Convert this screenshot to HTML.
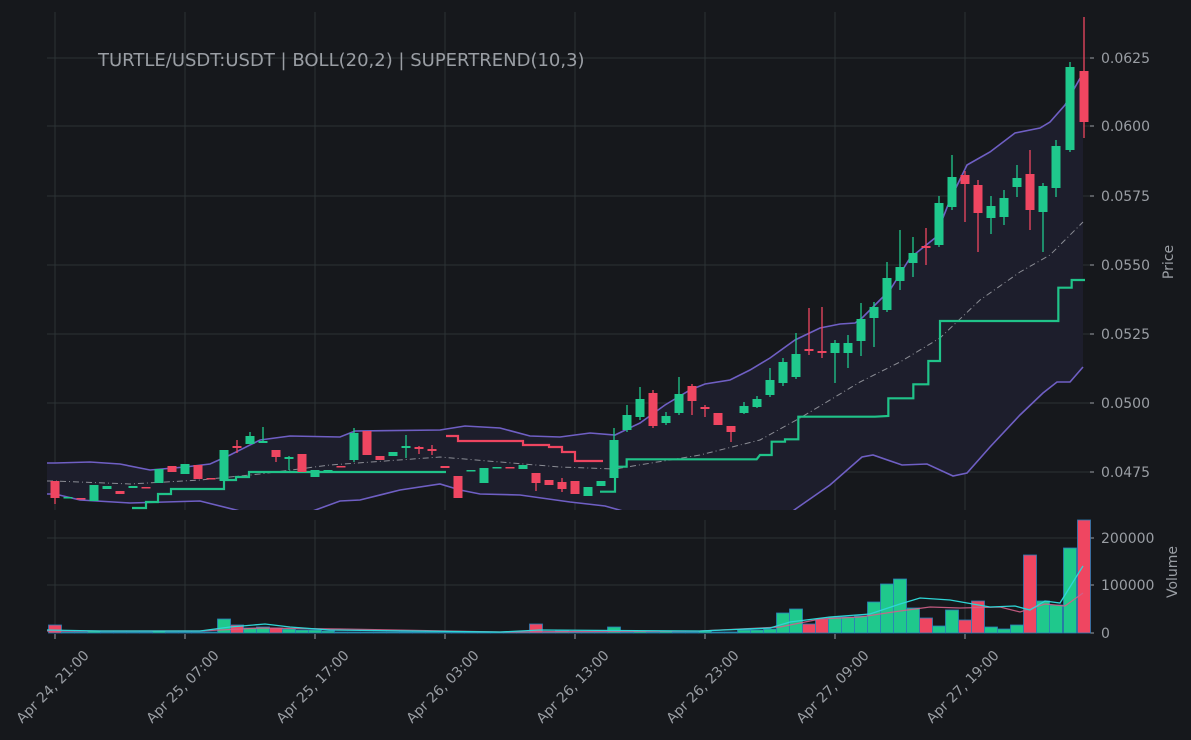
<!DOCTYPE html>
<html><head><meta charset="utf-8"><style>
html,body{margin:0;padding:0;background:#16181c;}
svg{display:block;font-family:"DejaVu Sans","Liberation Sans",sans-serif;}
</style></head><body>
<svg id="s" width="1191" height="740" viewBox="0 0 1191 740" xmlns="http://www.w3.org/2000/svg">
<rect width="1191" height="740" fill="#16181c"/>
<g stroke="#2c3235" stroke-width="1">
<line x1="47" y1="58" x2="1090" y2="58"/><line x1="47" y1="126" x2="1090" y2="126"/><line x1="47" y1="196" x2="1090" y2="196"/><line x1="47" y1="265" x2="1090" y2="265"/><line x1="47" y1="334" x2="1090" y2="334"/><line x1="47" y1="403" x2="1090" y2="403"/><line x1="47" y1="472" x2="1090" y2="472"/>
<line x1="47" y1="538" x2="1090" y2="538"/><line x1="47" y1="585" x2="1090" y2="585"/>
<line x1="55" y1="12" x2="55" y2="510"/><line x1="185" y1="12" x2="185" y2="510"/><line x1="315" y1="12" x2="315" y2="510"/><line x1="445" y1="12" x2="445" y2="510"/><line x1="575" y1="12" x2="575" y2="510"/><line x1="705" y1="12" x2="705" y2="510"/><line x1="835" y1="12" x2="835" y2="510"/><line x1="965" y1="12" x2="965" y2="510"/>
<line x1="55" y1="520" x2="55" y2="633"/><line x1="185" y1="520" x2="185" y2="633"/><line x1="315" y1="520" x2="315" y2="633"/><line x1="445" y1="520" x2="445" y2="633"/><line x1="575" y1="520" x2="575" y2="633"/><line x1="705" y1="520" x2="705" y2="633"/><line x1="835" y1="520" x2="835" y2="633"/><line x1="965" y1="520" x2="965" y2="633"/>
</g>
<g stroke="#9a9ea4" stroke-width="1">
<line x1="55" y1="634" x2="55" y2="639"/><line x1="185" y1="634" x2="185" y2="639"/><line x1="315" y1="634" x2="315" y2="639"/><line x1="445" y1="634" x2="445" y2="639"/><line x1="575" y1="634" x2="575" y2="639"/><line x1="705" y1="634" x2="705" y2="639"/><line x1="835" y1="634" x2="835" y2="639"/><line x1="965" y1="634" x2="965" y2="639"/>
<line x1="1090" y1="58" x2="1094" y2="58"/><line x1="1090" y1="126" x2="1094" y2="126"/><line x1="1090" y1="196" x2="1094" y2="196"/><line x1="1090" y1="265" x2="1094" y2="265"/><line x1="1090" y1="334" x2="1094" y2="334"/><line x1="1090" y1="403" x2="1094" y2="403"/><line x1="1090" y1="472" x2="1094" y2="472"/>
<line x1="1090" y1="538" x2="1094" y2="538"/><line x1="1090" y1="585" x2="1094" y2="585"/><line x1="1090" y1="633" x2="1094" y2="633"/>
</g>
<defs><clipPath id="cp"><rect x="47" y="12" width="1043" height="498"/></clipPath></defs>
<g id="main" clip-path="url(#cp)"></g>
<g id="vol"></g>
<g fill="#9a9ea4" font-size="14">
<text x="1101" y="63">0.0625</text><text x="1101" y="131">0.0600</text><text x="1101" y="201">0.0575</text><text x="1101" y="270">0.0550</text><text x="1101" y="339">0.0525</text><text x="1101" y="408">0.0500</text><text x="1101" y="477">0.0475</text>
<text x="1101" y="543">200000</text><text x="1101" y="590">100000</text><text x="1101" y="638">0</text>
<text transform="translate(1173,262) rotate(-90)" text-anchor="middle">Price</text>
<text transform="translate(1177,572) rotate(-90)" text-anchor="middle">Volume</text>
<text transform="translate(56,690) rotate(-45)" text-anchor="middle">Apr 24, 21:00</text>
<text transform="translate(186,690) rotate(-45)" text-anchor="middle">Apr 25, 07:00</text>
<text transform="translate(316,690) rotate(-45)" text-anchor="middle">Apr 25, 17:00</text>
<text transform="translate(446,690) rotate(-45)" text-anchor="middle">Apr 26, 03:00</text>
<text transform="translate(576,690) rotate(-45)" text-anchor="middle">Apr 26, 13:00</text>
<text transform="translate(706,690) rotate(-45)" text-anchor="middle">Apr 26, 23:00</text>
<text transform="translate(836,690) rotate(-45)" text-anchor="middle">Apr 27, 09:00</text>
<text transform="translate(966,690) rotate(-45)" text-anchor="middle">Apr 27, 19:00</text>
<text x="98" y="66" font-size="18">TURTLE/USDT:USDT | BOLL(20,2) | SUPERTREND(10,3)</text>
</g>
</svg>
<script>
var NS="http://www.w3.org/2000/svg";
function el(p,t,a){var e=document.createElementNS(NS,t);for(var k in a)e.setAttribute(k,a[k]);p.appendChild(e);return e;}
var main=document.getElementById("main"),vol=document.getElementById("vol");
var up=[[47,463],[55,463],[90,462],[120,464],[150,470],[185,467],[210,464],[230,455],[260,440],[290,436],[340,437],[355,431],[440,430],[465,426],[500,428],[530,436],[560,437],[590,433],[615,435],[640,423],[665,405],[690,390],[705,384],[730,380],[750,370],[770,358],[795,340],[820,328],[840,324],[855,323],[862,318],[890,290],[910,258],[935,238],[950,200],[967,165],[990,152],[1015,133],[1040,128],[1050,122],[1065,105],[1083,73]];
var lo=[[47,494],[55,494],[80,500],[130,503],[200,501],[240,511],[310,512],[340,501],[360,500],[400,490],[440,484],[460,490],[480,494],[520,495],[570,502],[605,506],[630,513],[790,513],[797,508],[830,485],[862,457],[873,455],[902,465],[927,464],[953,476],[967,473],[990,447],[1020,415],[1043,393],[1057,382],[1070,382],[1083,367]];
function pts(a){return a.map(function(p){return p.join(",")}).join(" ");}
el(main,"polygon",{points:pts(up)+" "+pts(lo.slice().reverse()),fill:"#1d1e2c"});
el(main,"polyline",{points:pts(up),fill:"none",stroke:"#6f5fc4","stroke-width":1.6});
el(main,"polyline",{points:pts(lo),fill:"none",stroke:"#6f5fc4","stroke-width":1.6});
var mid=[[47,481],[55,481],[130,484],[200,480],[260,474],[330,465],[440,457],[500,462],[560,467],[615,469],[700,455],[760,440],[800,418],[860,382],[900,362],[940,338],[980,300],[1020,272],[1050,255],[1083,222]];
el(main,"polyline",{points:pts(mid),fill:"none",stroke:"#8a8c94","stroke-width":1,"stroke-dasharray":"6,3,1,3"});
var st1=[[132,508],[146,508],[146,502],[158,502],[158,494],[171,494],[171,489],[224,489],[224,480],[236,480],[236,477],[249,477],[249,472],[446,472]];
el(main,"polyline",{points:pts(st1),fill:"none",stroke:"#20c389","stroke-width":2.2});
var st2=[[446,436],[458,436],[458,441],[523,441],[523,445],[549,445],[549,447],[562,447],[562,452],[575,452],[575,461],[603,461]];
el(main,"polyline",{points:pts(st2),fill:"none",stroke:"#ee4560","stroke-width":2.2});
var z=[[30,1025],[75,1025],[75,950],[110,950],[110,928],[500,928],[510,915],[545,915],[545,875],[585,875],[585,868],[625,868],[625,800],[855,800],[895,798],[895,745],[970,745],[970,703],[1015,703],[1015,633],[1050,633],[1050,513],[1405,513],[1405,413],[1445,413],[1445,390],[1485,390]];
el(main,"polyline",{points:pts(z.map(function(p){return[590+p[0]/3,150+p[1]/3]})),fill:"none",stroke:"#20c389","stroke-width":2.2});
var C=[[481,498,481,504,'r'],[497,498,0,0,'g'],[498,499,0,0,'r'],[485,501,0,0,'g'],[486,489,0,0,'g'],[491,494,0,0,'r'],[486,488,0,0,'g'],[487,488,0,0,'r'],[469,483,0,0,'g'],[466,472,0,0,'r'],
[464,474,0,0,'g'],[465,479,0,0,'r'],[478,479,0,0,'r'],[450,481,0,0,'g'],[446,448,440,453,'r'],[436,444,432,444,'g'],[441,443,427,443,'g'],[450,457,450,462,'r'],[457,459,456,470,'g'],[454,472,0,0,'r'],
[470,477,0,0,'g'],[470,471,0,0,'g'],[466,467,0,0,'r'],[433,460,428,462,'g'],[431,455,0,0,'r'],[456,460,0,0,'r'],[452,456,0,0,'g'],[446,448,435,458,'g'],[447,449,446,454,'r'],[449,451,445,455,'r'],
[466,468,0,0,'r'],[476,498,0,0,'r'],[470,471,0,0,'g'],[468,483,0,0,'g'],[467,468,0,0,'g'],[467,468,0,0,'r'],[465,469,0,0,'g'],[473,483,473,491,'r'],[480,485,0,0,'r'],[482,489,478,492,'r'],
[481,494,0,0,'r'],[487,496,0,0,'g'],[481,486,0,0,'g'],[440,478,428,478,'g'],[415,430,405,432,'g'],[399,417,387,420,'g'],[393,426,390,428,'r'],[416,423,412,425,'g'],[394,413,377,415,'g'],[386,401,384,415,'r'],
[407,409,405,417,'r'],[413,425,0,0,'r'],[426,432,426,442,'r'],[406,413,402,414,'g'],[399,407,396,408,'g'],[380,395,368,397,'g'],[362,383,358,386,'g'],[354,377,333,379,'g'],[349,351,308,355,'r'],[351,353,307,358,'r'],
[343,353,340,383,'g'],[343,353,335,368,'g'],[319,341,303,356,'g'],[307,318,302,347,'g'],[278,310,262,312,'g'],[267,281,230,290,'g'],[253,263,237,277,'g'],[246,248,228,265,'r'],[203,245,196,247,'g'],[177,207,155,210,'g'],
[175,184,171,222,'r'],[185,213,180,252,'r'],[206,218,196,234,'g'],[198,217,190,225,'g'],[178,187,165,197,'g'],[174,210,150,230,'r'],[186,212,183,252,'g'],[146,188,140,197,'g'],[67,150,62,152,'g'],[71,122,17,138,'r']];
var G="#1fc88c",R="#ef4661";
C.forEach(function(c,i){var x=55+13*i,col=c[4]=='g'?G:R;var wt=c[2]||c[0],wb=c[3]||c[1];
 if(i==78)x=1070; if(i==79)x=1084;
 el(main,"line",{x1:x,x2:x,y1:wt,y2:wb,stroke:col,"stroke-width":1.3});
 var h=Math.max(c[1]-c[0],1.5);el(main,"rect",{x:x-4.5,y:c[0],width:9,height:h,fill:col});});
var V={0:625,3:631,8:631,13:619,14:625,15:628,16:627,17:628,18:629,19:630,20:630,21:631,37:624,39:631,43:627,45:631,47:631,50:631,53:630,54:630,55:629,56:613,57:609,58:624,59:619,60:617,61:617,62:616,63:602,64:584,65:579,66:608,67:618,68:626,69:610,70:620,71:601,72:627,73:629,74:625,75:555,76:601,77:605,78:548,79:520};
var VC={0:1,14:1,17:1,37:1,58:1,59:1,67:1,70:1,71:1,75:1,79:1};
for(var i=0;i<80;i++){var x=55+13*i;if(i==78)x=1070;if(i==79)x=1084;var t=V[i]||632;
 el(vol,"rect",{x:x-6.5,y:t,width:13,height:633-t,fill:(VC[i]?R:G),stroke:"#2a7fb8","stroke-width":0.8});}
var c1=[[47,630],[100,631],[200,631],[230,627],[265,624],[290,627],[330,630],[500,632],[540,630],[700,631],[770,628],[790,622],[830,617],[870,614],[900,604],[920,598],[950,600],[990,607],[1015,606],[1030,610],[1045,601],[1060,603],[1083,566]];
var c2=[[47,631],[200,631],[260,628],[340,629],[500,632],[700,631],[780,627],[820,619],[860,617],[900,611],[930,607],[960,608],[1000,607],[1020,612],[1045,604],[1065,606],[1083,593]];
el(vol,"polyline",{points:pts(c2),fill:"none",stroke:"#d0608a","stroke-width":1.3,opacity:0.9});
el(vol,"polyline",{points:pts(c1),fill:"none",stroke:"#2ed6d6","stroke-width":1.3});
</script>
</body></html>
